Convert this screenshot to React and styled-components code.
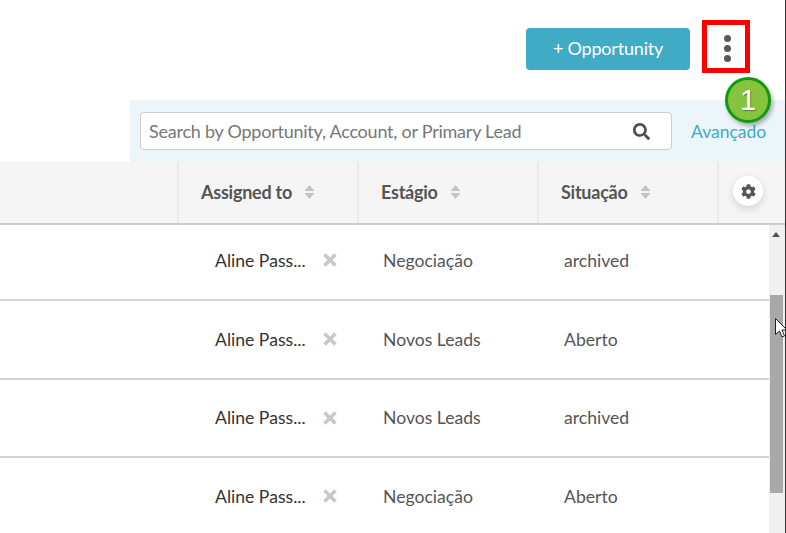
import React from 'react';
import styled, { createGlobalStyle } from 'styled-components';
import { FaCog, FaSearch } from 'react-icons/fa';

const GlobalStyle = createGlobalStyle`
  html, body {
    margin: 0;
    padding: 0;
    background: #fff;
  }
  * {
    box-sizing: border-box;
  }
`;

const Page = styled.div`
  position: relative;
  width: 786px;
  height: 533px;
  overflow: hidden;
  background: #fff;
  font-family: Lato, 'Liberation Sans', sans-serif;
  color: #555;
  border-right: 1px solid #333;
  display: flex;
  flex-direction: column;
`;

const TopBar = styled.div`
  height: 100px;
  flex: none;
  display: flex;
  align-items: flex-start;
  justify-content: flex-end;
  padding: 20px 35px 0 0;
  gap: 12px;
`;

const AddButton = styled.button`
  width: 164px;
  height: 42px;
  margin-top: 8px;
  padding: 0 0 2px;
  border: 0;
  border-radius: 4px;
  background: #3fabc4;
  color: #fff;
  font: 400 18px Lato, 'Liberation Sans', sans-serif;
  letter-spacing: -0.2px;
`;

const MenuBox = styled.div`
  width: 48px;
  height: 53px;
  border: 5px solid #fe0000;
  display: flex;
  flex-direction: column;
  align-items: center;
  justify-content: center;
  gap: 3px;
  padding: 3px 0 0 2px;
`;

const Dot = styled.span`
  width: 7px;
  height: 7px;
  border-radius: 50%;
  background: #58585a;
`;

const SearchBand = styled.div`
  height: 62px;
  flex: none;
  margin-left: 130px;
  background: #ecf5f9;
  display: flex;
  align-items: center;
  padding: 0 0 0 10px;
  gap: 19px;
`;

const SearchBox = styled.div`
  width: 532px;
  height: 38px;
  background: #fff;
  border: 1px solid #ccc;
  border-radius: 4px;
  display: flex;
  align-items: center;
  justify-content: space-between;
  padding: 0 21px 0 8px;
  font-size: 18px;
  color: #777;
  letter-spacing: -0.24px;
`;

const SearchIcon = styled(FaSearch)`
  width: 17px;
  height: 17px;
  color: #4f4f4f;
`;

const AdvancedLink = styled.a`
  font-size: 17.5px;
  color: #3fabc4;
  white-space: nowrap;
`;

const Grid = styled.div`
  display: grid;
  grid-template-columns: 177px 180px 180px 180px 1fr;
`;

const HeaderRow = styled(Grid)`
  height: 63px;
  flex: none;
  background: #f5f5f5;
  border-bottom: 2px solid #ccc;
`;

const HeaderCell = styled.div`
  display: flex;
  align-items: center;
  gap: 12px;
  padding-left: 22px;
  padding-bottom: 2px;
  font-size: 18px;
  font-weight: 700;
  color: #555;
  letter-spacing: -0.25px;
  border-left: ${(p) => (p.$first ? '0' : '2px solid #ebebeb')};
`;

const SortIcon = styled.svg`
  width: 11px;
  height: 16px;
  fill: #c4c4c4;
`;

const GearCell = styled(HeaderCell)`
  padding: 0 0 3px 14px;
`;

const GearButton = styled.div`
  width: 30px;
  height: 30px;
  border-radius: 50%;
  background: #fff;
  box-shadow: 0 3px 8px rgba(0, 0, 0, 0.14);
  display: flex;
  align-items: center;
  justify-content: center;
  color: #555;
  font-size: 15px;
`;

const Body = styled.div`
  flex: 1;
  display: flex;
  min-height: 0;
`;

const Rows = styled.div`
  flex: 1;
  min-width: 0;
`;

const Row = styled(Grid)`
  height: 78.5px;
  align-items: center;
  grid-template-columns: 215px 168px 181px 1fr;
  border-bottom: 2px solid #d4d4d4;
  font-size: 17.6px;

  &:first-child {
    height: 76px;
    padding-bottom: 4px;
  }
`;

const AssigneeCell = styled.div`
  grid-column: 1 / 3;
  display: flex;
  align-items: center;
  padding-left: 215px;
  gap: 17px;
  color: #333;
`;

const RowText = styled.div`
  color: #555;
`;

const ClearIcon = styled.svg`
  width: 14px;
  height: 14px;
  stroke: #c8c8c8;
  stroke-width: 3.6;
  fill: none;
`;

const Scrollbar = styled.div`
  position: relative;
  flex: none;
  width: 16px;
  background: #f0f0f0;
`;

const ScrollArrow = styled.div`
  width: 0;
  margin: 7px 0 0 3px;
  border-left: 4px solid transparent;
  border-right: 4px solid transparent;
  border-bottom: 5px solid #505050;
`;

const ScrollThumb = styled.div`
  position: absolute;
  left: 1px;
  right: 2px;
  top: 70px;
  height: 198px;
  background: #a8a8a8;
`;

const StepBadge = styled.div`
  position: absolute;
  left: 725px;
  top: 77px;
  width: 46px;
  height: 46px;
  border-radius: 50%;
  border: 3px solid #0f9a0f;
  background: #86c440;
  color: #fff;
  font: 400 29px 'Liberation Sans', sans-serif;
  text-shadow: 1px 1px 1px rgba(0, 0, 0, 0.35);
  box-shadow: 2px 3px 4px rgba(0, 0, 0, 0.3);
  display: flex;
  align-items: center;
  justify-content: center;
`;

const Cursor = styled.svg`
  position: absolute;
  left: 775px;
  top: 318px;
  width: 12px;
  height: 20px;
`;

const SortArrows = () => (
  <SortIcon viewBox="0 0 11 16">
    <path d="M5.5 1 10.5 7H.5zM.5 9h10l-5 6z" />
  </SortIcon>
);

const rows = [
  { stage: 'Negociação', status: 'archived' },
  { stage: 'Novos Leads', status: 'Aberto' },
  { stage: 'Novos Leads', status: 'archived' },
  { stage: 'Negociação', status: 'Aberto' },
];

const columns = ['Assigned to', 'Estágio', 'Situação'];

const App = () => {
  return (
    <Page>
      <GlobalStyle />
      <TopBar>
        <AddButton>+ Opportunity</AddButton>
        <MenuBox>
          <Dot />
          <Dot />
          <Dot />
        </MenuBox>
      </TopBar>
      <SearchBand>
        <SearchBox>
          Search by Opportunity, Account, or Primary Lead
          <SearchIcon />
        </SearchBox>
        <AdvancedLink>Avançado</AdvancedLink>
      </SearchBand>
      <HeaderRow>
        <HeaderCell $first />
        {columns.map((col) => (
          <HeaderCell key={col}>
            {col}
            <SortArrows />
          </HeaderCell>
        ))}
        <GearCell>
          <GearButton>
            <FaCog />
          </GearButton>
        </GearCell>
      </HeaderRow>
      <Body>
        <Rows>
          {rows.map((row, i) => (
            <Row key={i}>
              <AssigneeCell>
                Aline Pass...
                <ClearIcon viewBox="0 0 14 14">
                  <path d="M1.5 1.5 12.5 12.5M12.5 1.5 1.5 12.5" />
                </ClearIcon>
              </AssigneeCell>
              <RowText>{row.stage}</RowText>
              <RowText>{row.status}</RowText>
            </Row>
          ))}
        </Rows>
        <Scrollbar>
          <ScrollArrow />
          <ScrollThumb />
        </Scrollbar>
      </Body>
      <StepBadge>1</StepBadge>
      <Cursor viewBox="0 0 12 20">
        <path d="M.5.5v16l4-3.5 2.5 6 2.5-1-2.5-6h5z" fill="#fff" stroke="#222" />
      </Cursor>
    </Page>
  );
};

export default App;
